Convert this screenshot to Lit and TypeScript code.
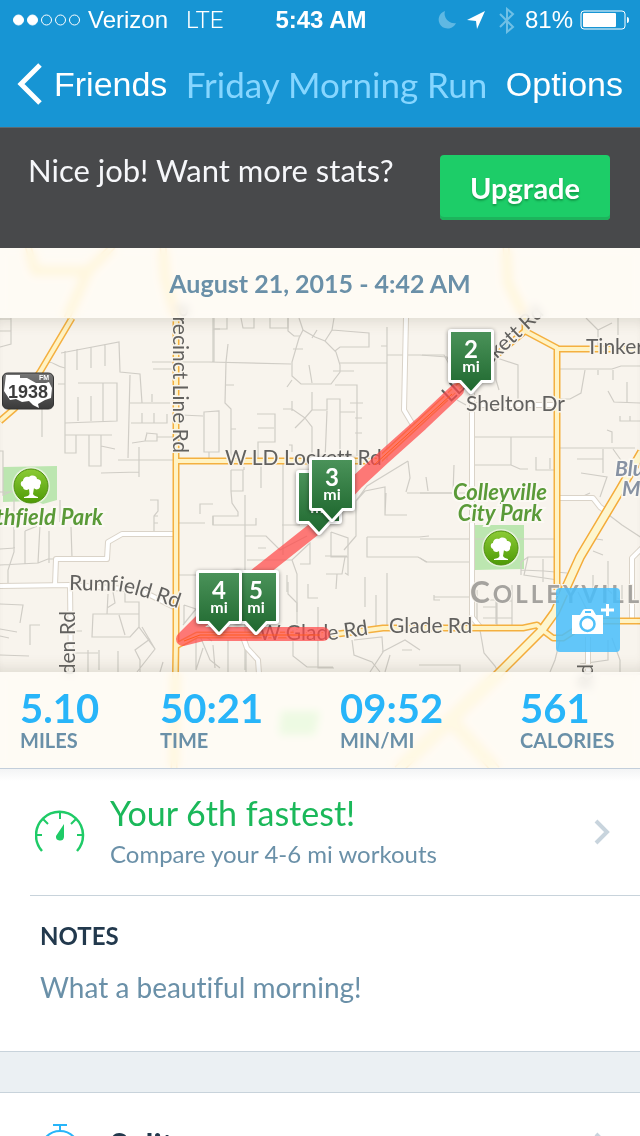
import { LitElement, html, svg, css } from "lit";
import { customElement, property } from "lit/decorators.js";

const MAJOR = [
  "M113 246L88 271L67 318",
  "M28 246L35 271H88",
  "M72 318L40 372L15 408L0 421",
  "M163 246L165 277L176 318V640L174 770",
  "M176 461H378L457 388L525 331L557 348V590",
  "M506 246L508 283L525 318V331",
  "M557 349H642",
  "M176 646L197 635H330L383 628H420H523L537 625L545 632L553 638H563L580 627L603 621H642",
];
const HIGHWAY = ["M642 452L620 490L580 557L555 612L542 630L498 674L398 770", "M449 718L496 770"];
const LOCAL = [
  "M406 318L404 410L413 425",
  "M472 393V617L480 627",
  "M472 405H557",
  "M557 498H593L600 507L607 512",
  "M642 548L632 558V618",
  "M588 637V700",
  "M0 586L70 585L71 674",
  "M55 585L56 559H107L108 542L122 534L176 534",
  "M70 585L140 590L176 608",
  "M243 637L247 648L258 660L259 674",
];
const LANES = [
  "M11 318V344L0 347M0 319H11M0 331H11",
  "M61 353L119 342L120 372L140 374L142 403M65 351V453H76V435M77 349V370M91 347V368M105 344V366",
  "M48 362C55 362 56 367 65 368M58 384H65M78 383H117V421L65 423M103 383V421M78 397V421M91 396V421M42 409V437",
  "M65 435H112M89 435V466H101V435M101 446L115 449M101 473L139 472M139 447V477M118 460H176",
  "M130 375L128 458M130 403H170M131 423H167V414M142 413V423M154 413V423M152 394V402M146 433L157 434V441H145L147 433M132 443L145 441M157 437H175",
  "M152 362H209L291 364M153 369H172M213 318V362M213 329H220M181 415L203 416M204 412L219 411V452H204ZM209 452V461",
  "M228 344L226 362L225 403L231 409V461M226 385H234M231 429H236M214 318V362",
  "M214 329H227V318M241 318L243 328H254V318M270 318V328H288V318M299 318L303 330L315 337L325 341L336 352L340 365V372L331 384L324 384H301L292 376V362L299 338L303 330",
  "M288 318V331L294 336L300 336M334 318L332 330L325 341M332 330L369 333V347H340L335 351M293 349H303M340 363H387M333 371H354M309 365L312 383M292 380L287 387M312 338L317 330",
  "M335 385H357V456M350 403H363M355 418H362M355 433H362M312 392V410L305 418L292 409H283M292 401V411M305 418L312 427V461M305 418L295 428M312 410H327V399H340V460M340 412H355M327 411L325 460",
  "M257 414H275V442H258V461M258 428H274M289 445H292V452M387 327V460M387 355H420L447 357L453 370M381 346H387",
  "M231 470H243V491H231L232 503L238 512V516H213V525H256V518M231 470V491M261 465V488M244 467V470M283 461V555",
  "M282 525H300M245 536H266L280 550L307 536M245 495V670M258 548H266M247 560H292L310 543V564H300M292 560L297 574V612M287 575V592",
  "M408 461L367 486L356 501V536L344 550M408 461L410 478L406 492M407 493H453L454 465M356 501L365 491L385 487V515H407M385 515L386 493",
  "M331 532L348 538V575L345 573M331 532V557H348M325 556H347M345 557L342 574H326M337 574L336 589M367 537H419L429 536M367 537V557H418L427 562M387 573V630M365 577V607",
  "M376 595V627M318 607V668H334M288 582V594L297 603V630M308 584V598H318M293 630V656L307 667H333M246 637V672",
  "M360 461L380 459M422 355H444L448 362L451 371M494 357L518 365V406M496 360L496 380L499 390M457 400L466 405",
  "M474 437H557M511 437V465L473 465M511 465L520 469H528M536 457V470H555M550 458V469M420 493L472 493M426 477L428 491M420 539H557",
  "M560 369H612L621 366H640M585 370L581 393L570 399H560M598 370V375M613 370V380M608 391L614 402L640 403M627 382V402M620 416V421H640M630 416V421",
  "M586 318L598 330L612 323M598 330V345M618 318V335M560 448H635M603 449V473M577 459H603M581 473L607 477L600 497M613 449L628 470M612 443V432L607 430",
  "M605 512L622 525L642 538M590 538L603 540M593 551L603 555M579 498L590 493",
  "M521 575V562L528 557H558V584M543 559V582M521 570L544 571L567 573M528 557L524 575L558 580M420 558L426 562H472M434 597H474M434 595V600H440",
  "M477 590V627M483 600H496V624M497 601H512M497 601V625M512 585V625M483 607H497M483 618H512M593 575V600M608 561V590L622 602V585M578 592L587 610M608 640V660L580 664",
  "M480 630L484 653L495 666L498 672M419 665H460V672M560 640L555 660L550 672M612 638L620 660V672M600 674H640",
  "M352 640L354 655L372 662L380 672M354 640L382 637L383 652L370 672M382 652L405 640L420 650M390 655L385 672M402 650H412M213 645L215 668M228 640V672",
  "M150 500H158V511L154 516V532M154 523H158M154 516H158M179 523H205M213 516V525M179 575H198M213 504H200V514",
  "M14 500V552L8 570V585M0 549L15 548M25 531V564M25 531L40 525L38 563L0 565M49 531V563M38 563L48 559H54M71 527L72 558M60 500V522",
  "M0 604L23 605L20 623M0 629L17 632M0 636L9 638M30 645V625H40M72 631H82M0 655L29 656M88 650V672M99 650V670M118 651V672M64 653H98",
  "M93 614H139V627L130 637L92 637ZM119 615L125 635M108 594L107 614M113 592L115 603L107 608M125 592V602H139L139 627L155 649L137 672M142 627L155 649M150 639L135 650L140 660V672M163 662L160 672",
  "M184 605L196 609L183 625M184 605V624M196 635V670L203 648M200 636L210 660L220 668M205 636L212 641M0 451H3V495L12 491M0 492H12",
];

const tree = (x: number, y: number) => svg`
  <g transform="translate(${x} ${y})">
    <circle r="19" fill="#eef4e4" opacity=".8" />
    <circle r="17" fill="url(#leaf)" stroke="#4f8f10" stroke-width="1" />
    <path fill="#fff" d="M-1.5 8L-2 3C-4 5-8 4-8 1C-11 0-11-5-8-5C-8-9-4-10-2-9C1-12 6-10 6-7C10-7 11-3 9-1C10 3 5 5 3 2L2 8C3 10 5 10 7 11V12H-7V11C-4 10-2 10-1.5 8Z" />
  </g>`;

const pin = (x: number, y: number, mile: number) => svg`
  <g class="pin" transform="translate(${x} ${y})">
    <path class="pin-shape" d="M-20 0H20V48H10L0 59L-10 48H-20Z" />
    <text class="pin-mile" y="26">${mile}</text>
    <text class="pin-unit" y="40">mi</text>
  </g>`;

@customElement("run-map")
export class RunMap extends LitElement {
  static styles = css`
    :host { display: block; font-family: Lato, "Open Sans", sans-serif; }
    .canvas { display: block; width: 100%; height: 100%; background: #f8f4ed; }
    .lane { fill: none; stroke: #d0cdc6; stroke-width: 1.2; }
    .local-edge { fill: none; stroke: #dad3c8; stroke-width: 6; stroke-linejoin: round; }
    .local { fill: none; stroke: #fff; stroke-width: 4; stroke-linejoin: round; }
    .major-edge { fill: none; stroke: #f4b040; stroke-width: 7; stroke-linejoin: round; }
    .major { fill: none; stroke: #fff3c4; stroke-width: 4; stroke-linejoin: round; }
    .highway-edge { fill: none; stroke: #f4ac3a; stroke-width: 10; }
    .highway { fill: none; stroke: #fdf6cf; stroke-width: 7; }
    .park { fill: #bce6b0; }
    .route { fill: none; stroke: #ff4848; stroke-opacity: .72; stroke-width: 14; stroke-linecap: round; stroke-linejoin: round; }
    .route-core { fill: none; stroke: #ff5a1e; stroke-width: 1; }
    .label { font-size: 21px; fill: #62615f; stroke: #f8f4ed; stroke-width: 3; paint-order: stroke; }
    .end { text-anchor: end; }
    .park-label { font-size: 22px; font-weight: 700; font-style: italic; fill: #5a9a38; stroke: #fbf9f3; stroke-width: 4; paint-order: stroke; font-variant-ligatures: none; }
    .middle { text-anchor: middle; }
    .area-label { font-size: 21px; font-weight: 700; font-style: italic; fill: #8792a3; stroke: #fbf9f3; stroke-width: 3; paint-order: stroke; }
    .city { font-size: 24px; font-weight: 700; letter-spacing: 3px; fill: #a5a39f; stroke: #f8f4ed; stroke-width: 2; paint-order: stroke; }
    .city-initial { font-size: 30px; }
    .shield { font: 700 18px "Liberation Sans", sans-serif; fill: #3c3c3c; text-anchor: middle; }
    .shield-kind { font: 700 7px "Liberation Sans", sans-serif; fill: #fff; }
    .pin { filter: drop-shadow(0 1px 2px rgba(0, 0, 0, .45)); }
    .pin-shape { fill: url(#green); stroke: #fff; stroke-width: 6; stroke-linejoin: round; paint-order: stroke; }
    .pin-mile { font-size: 24px; font-weight: 700; fill: #fff; text-anchor: middle; }
    .pin-unit { font-size: 16px; font-weight: 700; fill: #fff; text-anchor: middle; }
  `;

  render() {
    return html`
      <svg class="canvas" viewBox="0 248 640 520" preserveAspectRatio="xMidYMid slice" role="img" aria-label="Route map">
        <defs>
          <linearGradient id="green" x1="0" y1="0" x2="0" y2="1">
            <stop offset="0" stop-color="#4a9259" /><stop offset="1" stop-color="#1f682f" />
          </linearGradient>
          <linearGradient id="leaf" x1="0" y1="0" x2="0" y2="1">
            <stop offset="0" stop-color="#8ccb36" /><stop offset="1" stop-color="#4e9a06" />
          </linearGradient>
          <linearGradient id="plate" x1="0" y1="0" x2="0" y2="1">
            <stop offset="0" stop-color="#777" /><stop offset="1" stop-color="#3a3a3a" />
          </linearGradient>
          <path id="rumfield" d="M69 590L118 591Q140 594 210 620" />
          <path id="glade" d="M259 640H332L400 630" />
          <path id="lockett" d="M450 403L560 300" />
        </defs>
        <path class="park" d="M3 467L57 466V500L43 504L35 501L3 502Z" />
        <path class="park" d="M475 525H524V569L475 570Z" />
        <path class="park" d="M281 711H320L315 735H279Z" />
        ${LANES.map((d) => svg`<path class="lane" d=${d} />`)}
        ${LOCAL.map((d) => svg`<path class="local-edge" d=${d} />`)}
        ${LOCAL.map((d) => svg`<path class="local" d=${d} />`)}
        ${MAJOR.map((d) => svg`<path class="major-edge" d=${d} />`)}
        ${HIGHWAY.map((d) => svg`<path class="highway-edge" d=${d} />`)}
        ${MAJOR.map((d) => svg`<path class="major" d=${d} />`)}
        ${HIGHWAY.map((d) => svg`<path class="highway" d=${d} />`)}

        <text class="label end" transform="translate(173 453) rotate(90)">Precinct Line Rd</text>
        <text class="label end" transform="translate(75 611) rotate(-90)">den Rd</text>
        <text class="label end" transform="translate(593 664) rotate(-90)">Rd</text>
        <text class="label" x="225" y="465">W LD Lockett Rd</text>
        <text class="label"><textPath href="#lockett">LD Lockett Rd</textPath></text>
        <text class="label" x="466" y="411">Shelton Dr</text>
        <text class="label" x="586" y="354">Tinker</text>
        <text class="label"><textPath href="#rumfield">Rumfield Rd</textPath></text>
        <text class="label"><textPath href="#glade">W Glade Rd</textPath></text>
        <text class="label" x="389" y="633">Glade Rd</text>
        <text class="park-label end" x="103" y="525">thfield Park</text>
        <text class="park-label middle" x="500" y="500">Colleyville</text>
        <text class="park-label middle" x="500" y="521">City Park</text>
        <text class="area-label" x="615" y="476">Blu</text>
        <text class="area-label" x="622" y="496">M</text>
        <text class="city" x="470" y="603"><tspan class="city-initial">C</tspan>OLLEYVILL</text>
        ${tree(31, 486)} ${tree(501, 548)}

        <g>
          <rect x="2.500" y="373" width="51" height="36" rx="5" fill="url(#plate)" stroke="#333" />
          <path fill="#fff" d="M6 375H20V378H27L36 383H46L49 382L52 388L51 398L45 400L38 404L39 408L33 405L29 401L22 402L16 399L10 400L4 391Z" />
          <text class="shield" x="28" y="398">1938</text>
          <text class="shield-kind" x="39" y="380">FM</text>
        </g>

        <path class="route" d="M457 390L421 424L383 458L357 482L313 530L260 572L200 622L183 639L203 634H323" />
        <path class="route-core" d="M184 641L200 635H320M374 465L452 394" />
        ${pin(319, 473, 1)} ${pin(332, 460, 3)} ${pin(471, 332, 2)} ${pin(256, 573, 5)} ${pin(219, 573, 4)}
      </svg>`;
  }
}

@customElement("list-row")
export class ListRow extends LitElement {
  @property() heading = "";
  @property() detail = "";
  @property() tone = "good";

  static styles = css`
    :host { display: block; font-family: Lato, "Open Sans", sans-serif; }
    .row { display: flex; align-items: center; gap: 25px; padding: 22px 30px 22px 35px; color: #6a90a8; text-decoration: none; }
    .copy { flex: 1; display: flex; flex-direction: column; }
    .heading { font-size: 34px; line-height: 44px; color: #1bb85a; }
    .strong { font-size: 32px; line-height: 60px; font-weight: 700; color: #22394d; }
    .detail { font-size: 24px; line-height: 38px; }
    .chevron { flex: none; display: block; width: 17px; height: 26px; }
  `;

  render() {
    return html`
      <a class="row" href="#">
        <slot name="icon"></slot>
        <span class="copy">
          <span class=${this.tone === "good" ? "heading" : "strong"}>${this.heading}</span>
          ${this.detail ? html`<span class="detail">${this.detail}</span>` : null}
        </span>
        <svg class="chevron" viewBox="0 0 17 26" aria-hidden="true">
          <path d="M3 2L14 13L3 24" fill="none" stroke="#c8d4dd" stroke-width="4" />
        </svg>
      </a>`;
  }
}

const STATS = [
  { value: "5.10", unit: "MILES" },
  { value: "50:21", unit: "TIME" },
  { value: "09:52", unit: "MIN/MI" },
  { value: "561", unit: "CALORIES" },
];

@customElement("app-root")
export class AppRoot extends LitElement {
  static styles = css`
    :host { display: block; height: 100vh; overflow-y: auto; scrollbar-width: none; background: #fff; font-family: Lato, "Open Sans", sans-serif; font-variant-ligatures: none; color: #6a90a8; }
    .top { background: #1795d4; color: #fff; border-bottom: 1px solid #5c6a72; }
    .status { display: grid; grid-template-columns: 1fr auto 1fr; align-items: center; height: 40px; padding: 0 10px 0 12px; font: 24px/40px "Liberation Sans", sans-serif; }
    .carrier { display: flex; align-items: center; gap: 8px; }
    .indicators { display: flex; align-items: center; justify-content: flex-end; gap: 7px; }
    .signal, .glyph { display: block; }
    .network { font: 300 24px/40px Roboto, sans-serif; padding-left: 10px; }
    .clock { font-weight: 700; }
    .nav { display: flex; align-items: center; justify-content: space-between; height: 87px; padding: 0 17px; }
    .nav-button { display: flex; align-items: center; gap: 11px; padding: 0; border: 0; background: none; color: #fff; font: 34px/40px "Liberation Sans", sans-serif; }
    .title { margin: 0; font-size: 35px; line-height: 40px; font-weight: 400; color: #86d6ff; white-space: nowrap; }
    .upsell { display: flex; align-items: flex-start; justify-content: space-between; padding: 27px 30px 28px 28px; background: #48494b; color: #f6f7fa; }
    .pitch { margin: 0; font-size: 31px; line-height: 30px; }
    .upgrade { width: 170px; height: 65px; padding: 0; border: 0; border-radius: 4px; background: #1dcd68; box-shadow: inset 0 -3px #1db45c; color: #fff; font: 700 29px/65px Lato, sans-serif; text-shadow: 0 2px 2px rgba(0, 90, 30, .4); }
    .map { position: relative; display: grid; grid-template-rows: auto minmax(354px, 1fr) auto; border-bottom: 1px solid #c3cedb; }
    .backdrop { position: absolute; inset: 0; }
    .frost { position: relative; background: rgba(255, 252, 248, .8); backdrop-filter: blur(4px) saturate(1.8); }
    .date { margin: 0; padding: 20px; font-size: 25px; line-height: 30px; font-weight: 700; text-align: center; color: #6a90a8; }
    .window { position: relative; display: flex; align-items: flex-end; justify-content: flex-end; padding: 20px; box-shadow: inset 0 14px 14px -10px rgba(90, 80, 60, .15), inset 0 -14px 14px -10px rgba(90, 80, 60, .15); }
    .camera { display: grid; place-items: center; width: 64px; height: 64px; padding: 0; border: 0; border-radius: 4px; background: rgba(73, 190, 250, .86); }
    .stats { display: grid; grid-template-columns: 140fr 180fr 180fr 100fr; margin: 0; padding: 14px 20px 18px; }
    .stat { display: flex; flex-direction: column-reverse; }
    .value { margin: 0; font-size: 40px; line-height: 44px; font-weight: 700; color: #28b5f9; }
    .unit { font-size: 20px; line-height: 20px; font-weight: 700; white-space: nowrap; }
    .ranking { background: linear-gradient(#f3f4f5, #fff 12px); }
    .notes { margin-left: 30px; padding: 25px 10px 44px; border-top: 1px solid #c8d3db; }
    .notes-title { margin: 0 0 16px; font-size: 24px; line-height: 30px; font-weight: 700; color: #22394d; }
    .notes-text { margin: 0; font-size: 28px; line-height: 40px; }
    .gap { height: 40px; border: 1px solid #c8d3db; border-width: 1px 0; background: #ebf0f3; }
    .icon { flex: none; display: block; width: 50px; height: 50px; }
  `;

  render() {
    return html`
      <header class="top">
        <div class="status">
          <div class="carrier">
            <svg class="signal" width="68" height="12" viewBox="0 0 68 12" aria-label="Signal">
              <g stroke="#fff" fill="none">
                <circle cx="6.500" cy="6" r="5" fill="#fff" /><circle cx="20.500" cy="6" r="5" fill="#fff" />
                <circle cx="34.500" cy="6" r="5" /><circle cx="48.500" cy="6" r="5" /><circle cx="62.500" cy="6" r="5" />
              </g>
            </svg>
            <span>Verizon</span><span class="network">LTE</span>
          </div>
          <span class="clock">5:43 AM</span>
          <div class="indicators">
            <svg class="glyph" width="18" height="19" viewBox="0 0 18 19"><path fill="#5fb8e3" d="M7 0A9 9 0 1 0 18 12A9.500 9.500 0 0 1 7 0Z" /></svg>
            <svg class="glyph" width="26" height="19" viewBox="0 0 26 19"><path fill="#fff" d="M22 0L14 18L13 10L4 9Z" /></svg>
            <svg class="glyph" width="22" height="27" viewBox="0 0 22 27"><path fill="none" stroke="#6fc0e6" stroke-width="2" d="M4 7L17 20L11 25V2L17 7L4 20" /></svg>
            <span>81%</span>
            <svg class="glyph" width="50" height="20" viewBox="0 0 50 20" aria-label="Battery">
              <rect x="1" y="1" width="44" height="18" rx="3" fill="none" stroke="#fff" />
              <rect x="3" y="3" width="33" height="14" rx="1" fill="#fff" /><path d="M47 7Q49 7 49 10T47 13Z" fill="#fff" />
            </svg>
          </div>
        </div>
        <nav class="nav">
          <button class="nav-button">
            <svg width="26" height="42" viewBox="0 0 26 42" aria-hidden="true"><path d="M23 2L4 21L23 40" fill="none" stroke="#fff" stroke-width="5" /></svg>
            <span>Friends</span>
          </button>
          <h1 class="title">Friday Morning Run</h1>
          <button class="nav-button">Options</button>
        </nav>
      </header>

      <section class="upsell">
        <p class="pitch">Nice job! Want more stats?</p>
        <button class="upgrade">Upgrade</button>
      </section>

      <section class="map">
        <run-map class="backdrop"></run-map>
        <h2 class="frost date">August 21, 2015 - 4:42 AM</h2>
        <div class="window">
          <button class="camera" aria-label="Add photo">
            <svg width="64" height="64" viewBox="0 0 64 64" aria-hidden="true">
              <path fill="#fff" d="M16 27H24L27 22Q28 21 29 21H35Q36 21 37 22L40 27H47V46H16Z" />
              <path stroke="#50c1fa" stroke-width="2" d="M29 24H35" />
              <circle cx="31.500" cy="36" r="7" fill="#fff" stroke="#50c1fa" stroke-width="2.500" />
              <path stroke="#fff" stroke-width="3" d="M45 22H58M51.500 16V28" />
            </svg>
          </button>
        </div>
        <dl class="frost stats">
          ${STATS.map((s) => html`<div class="stat"><dt class="unit">${s.unit}</dt><dd class="value">${s.value}</dd></div>`)}
        </dl>
      </section>

      <list-row class="ranking" heading="Your 6th fastest!" detail="Compare your 4-6 mi workouts">
        <svg slot="icon" class="icon" viewBox="0 0 50 50" aria-hidden="true">
          <g fill="none" stroke="#1fcb67" stroke-width="2.500">
            <path d="M7 44A23.500 23.500 0 1 1 42 44" />
            <path stroke-width="2" d="M1 28H7M42 28H48M25 5V12M8 12L13 17M41 12L36 17" />
          </g>
          <path fill="#1fcb67" d="M29 17L29 30A4 4 0 1 1 21 29Z" />
        </svg>
      </list-row>

      <section class="notes">
        <h2 class="notes-title">NOTES</h2>
        <p class="notes-text">What a beautiful morning!</p>
      </section>
      <div class="gap"></div>

      <list-row heading="Splits" tone="plain">
        <svg slot="icon" class="icon" viewBox="0 0 50 50" aria-hidden="true">
          <g fill="none" stroke="#28b5f9" stroke-width="2">
            <path d="M18 5H32M25 5V11" /><circle cx="25" cy="30" r="19" /><path d="M25 19V30H33" />
          </g>
        </svg>
      </list-row>`;
  }
}
